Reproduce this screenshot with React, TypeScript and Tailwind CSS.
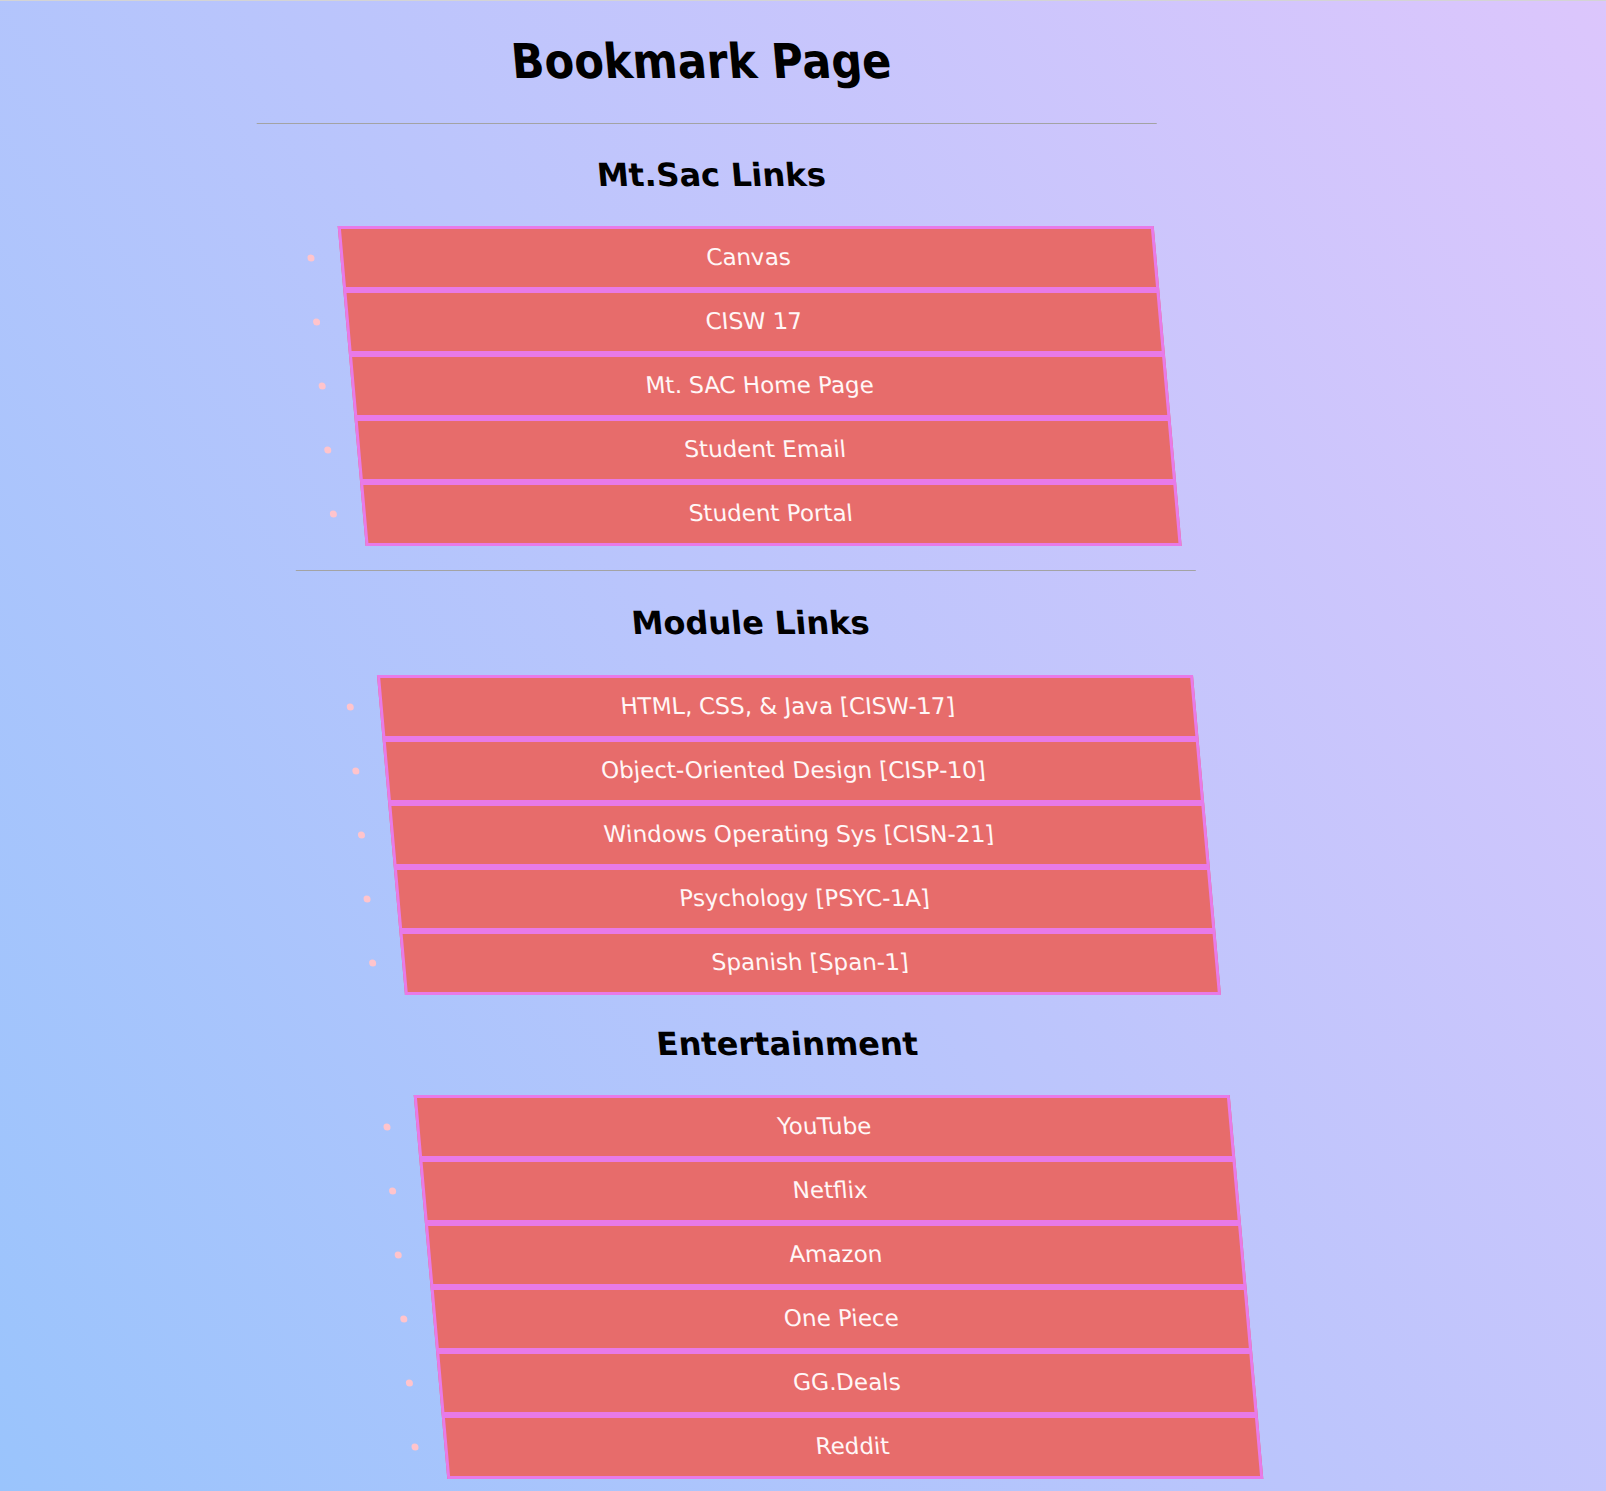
import React from 'react';

const MTSAC_LINKS = ['Canvas', 'CISW 17', 'Mt. SAC Home Page', 'Student Email', 'Student Portal'];

const MODULE_LINKS = [
  'HTML, CSS, & Java [CISW-17]',
  'Object-Oriented Design [CISP-10]',
  'Windows Operating Sys [CISN-21]',
  'Psychology [PSYC-1A]',
  'Spanish [Span-1]',
];

const FUN_LINKS = ['YouTube', 'Netflix', 'Amazon', 'One Piece', 'GG.Deals', 'Reddit'];

const LinkList: React.FC<{ items: string[]; className?: string }> = ({ items, className = '' }) => (
  <ul className={`ml-[72px] mr-[12px] ${className}`}>
    {items.map((item) => (
      <li
        key={item}
        className="relative h-16 border-[3px] border-[#e87ae8] bg-[#e76c6b] text-center text-[23px] leading-[56px] text-[#fff7f7]"
      >
        {/* bullet marker */}
        <span className="absolute -left-[36px] top-1/2 size-[7px] -translate-y-1/2 rounded-full bg-[#ffc4cc]" />
        <a href="#" className="text-[#fff7f7]">
          {item}
        </a>
      </li>
    ))}
  </ul>
);

export default function App() {
  return (
    <div className="min-h-screen overflow-hidden border-t border-[#d4d4d4] bg-[linear-gradient(57deg,#9ac4fc,#dcc6fc)] font-['DejaVu_Sans',sans-serif] text-black">
      <main className="ml-[246px] w-[900px] origin-top-left skew-x-[5deg] pt-[32px] pb-[12px]">
        <h1 className="text-center font-['DejaVu_Sans_Condensed','DejaVu_Sans',sans-serif] text-[48px] font-bold leading-[56px]">
          Bookmark Page
        </h1>
        <hr className="mt-[34px] border-t border-[#a3a3a3]" />

        {/* Mt.Sac */}
        <h2 className="mt-[32px] text-center text-[32px] font-bold leading-[38px]">Mt.Sac Links</h2>
        <LinkList items={MTSAC_LINKS} className="mt-[32px]" />
        <hr className="mt-[24px] border-t border-[#a3a3a3]" />

        {/* Modules */}
        <h2 className="mt-[33px] text-center text-[32px] font-bold leading-[38px]">Module Links</h2>
        <LinkList items={MODULE_LINKS} className="mt-[33px]" />

        {/* Entertainment */}
        <h2 className="mt-[30px] text-center text-[32px] font-bold leading-[38px]">Entertainment</h2>
        <LinkList items={FUN_LINKS} className="mt-[32px]" />
      </main>
    </div>
  );
}
